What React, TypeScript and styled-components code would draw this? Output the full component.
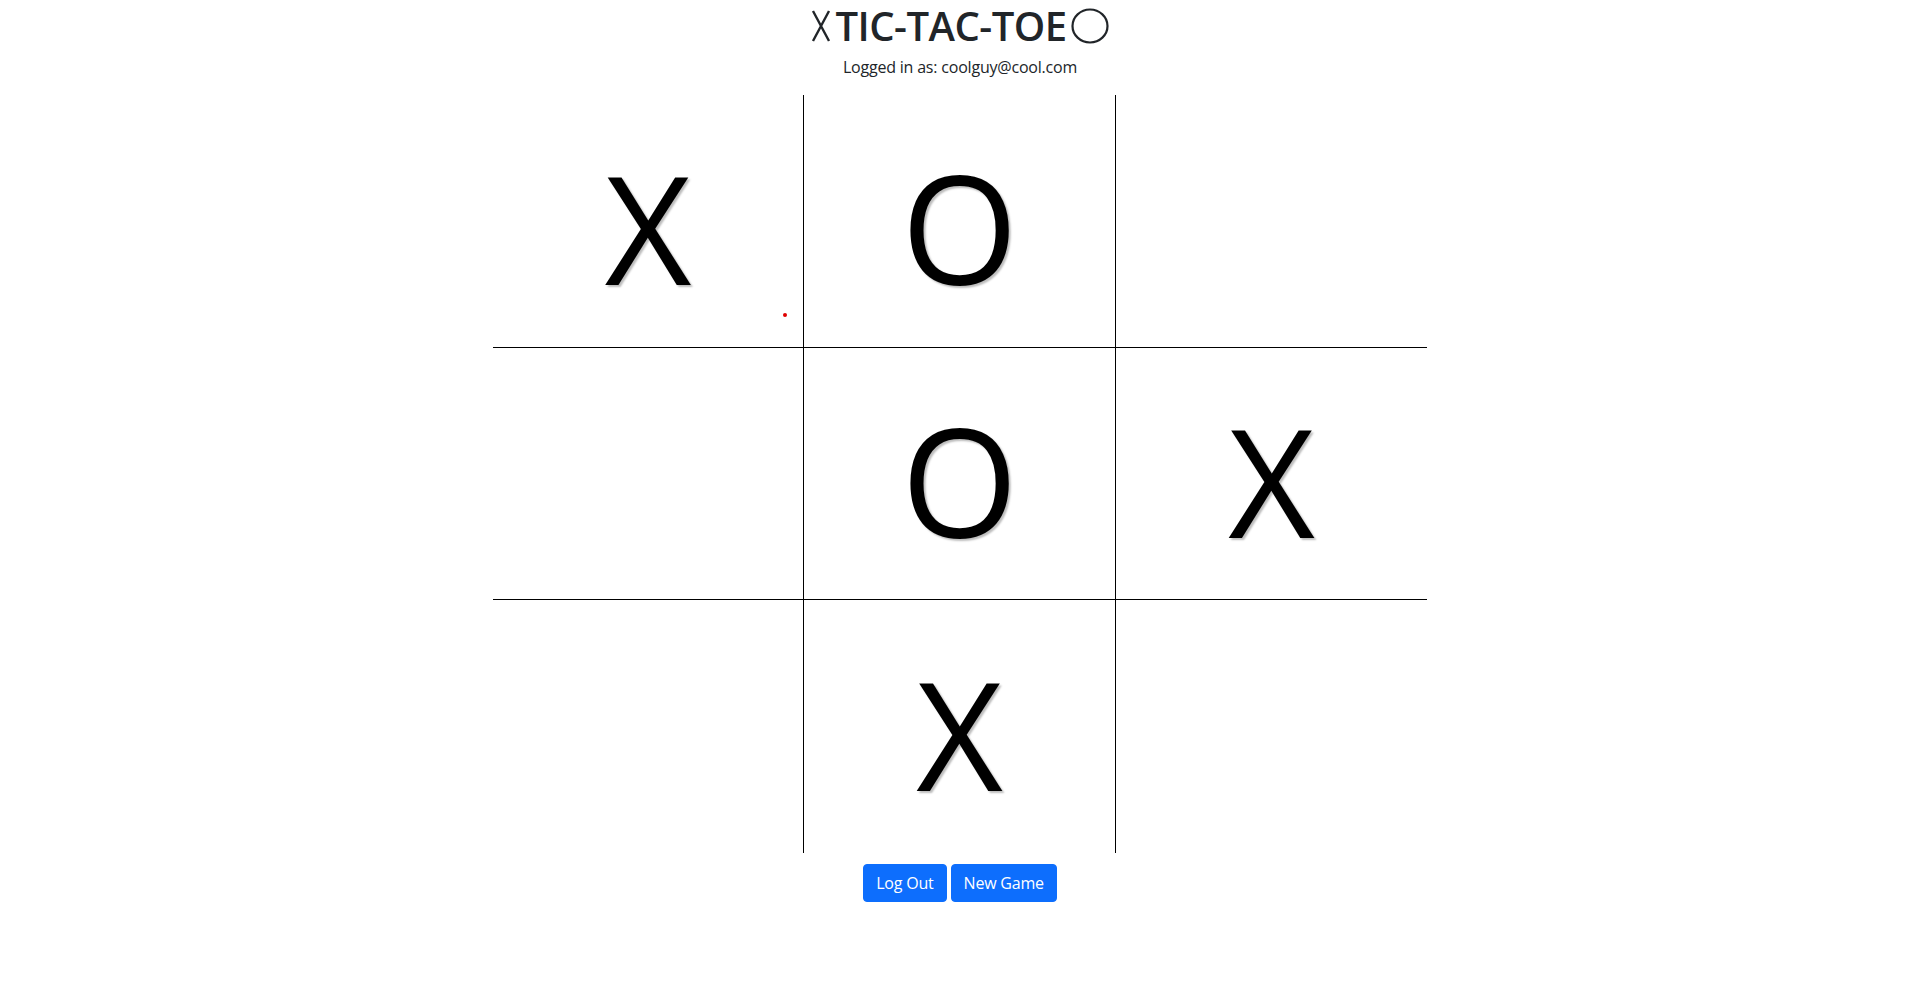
import React from "react";
import styled, { createGlobalStyle } from "styled-components";

const GlobalStyle = createGlobalStyle`
  html, body { margin: 0; padding: 0; background: #fff; }
  body {
    font-family: "Open Sans", "Noto Sans", "Liberation Sans", sans-serif;
    color: #212529;
  }
  * { box-sizing: border-box; }
`;

const Page = styled.main`
  display: flex;
  flex-direction: column;
  align-items: center;
`;

const Title = styled.h1`
  margin: 0 0 3px;
  font-size: 40px;
  line-height: 52px;
  font-weight: 600;
  display: flex;
  align-items: center;
  gap: 4px;
  color: #212529;
  letter-spacing: -0.5px;
`;

const Subtitle = styled.p`
  margin: 0 0 16px;
  font-size: 16px;
  line-height: 24px;
  letter-spacing: -0.2px;
`;

const Board = styled.div`
  width: 934px;
  display: grid;
  grid-template-columns: 310px 313px 311px;
  grid-template-rows: 252px 253px 253px;
`;

const Cell = styled.div<{ $row: number; $col: number }>`
  position: relative;
  display: flex;
  align-items: center;
  justify-content: center;
  border-left: ${(p) => (p.$col === 1 ? "1px solid #000" : "none")};
  border-right: ${(p) => (p.$col === 1 ? "1px solid #000" : "none")};
  border-top: ${(p) => (p.$row === 1 ? "1px solid #000" : "none")};
  border-bottom: ${(p) => (p.$row === 1 ? "1px solid #000" : "none")};
  font-family: "Open Sans", "Noto Sans", sans-serif;
  font-size: 150px;
  line-height: 1;
  color: #000;
  text-shadow: 2px 2px 2px #bdbdbd;
  padding-top: 12px;
`;

const Dot = styled.span`
  position: absolute;
  left: 290px;
  top: 218px;
  width: 4px;
  height: 4px;
  border-radius: 50%;
  background: #e00000;
`;

const Actions = styled.div`
  margin-top: 11px;
  display: flex;
  gap: 4px;
`;

const Button = styled.button`
  font-family: "Open Sans", "Noto Sans", sans-serif;
  font-size: 16px;
  line-height: 24px;
  padding: 6px 12px;
  border: 1px solid #0d6efd;
  border-radius: 4px;
  background: #0d6efd;
  color: #fff;
  letter-spacing: -0.2px;
  cursor: pointer;
`;

const board = ["X", "O", "", "", "O", "X", "", "X", ""];

export default function App() {
  return (
    <>
      <GlobalStyle />
      <Page>
        <Title>
          <svg width="20" height="32" viewBox="0 0 20 32" aria-hidden>
            <path d="M2 1 L18 31 M18 1 L2 31" stroke="#212529" strokeWidth="2.4" fill="none" />
          </svg>
          <span>TIC-TAC-TOE</span>
          <svg width="38" height="36" viewBox="0 0 38 36" aria-hidden>
            <ellipse cx="19" cy="18" rx="17.5" ry="16.5" stroke="#212529" strokeWidth="2.2" fill="none" />
          </svg>
        </Title>
        <Subtitle>Logged in as: coolguy@cool.com</Subtitle>
        <Board>
          {board.map((v, i) => (
            <Cell key={i} $row={Math.floor(i / 3)} $col={i % 3}>
              {v}
              {i === 0 && <Dot />}
            </Cell>
          ))}
        </Board>
        <Actions>
          <Button>Log Out</Button>
          <Button>New Game</Button>
        </Actions>
      </Page>
    </>
  );
}
